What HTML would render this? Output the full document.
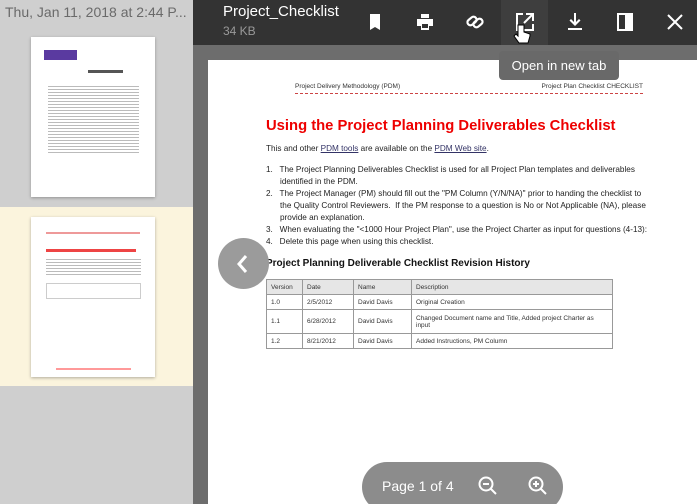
<!DOCTYPE html>
<html><head><style>
*{margin:0;padding:0;box-sizing:border-box}
html,body{width:697px;height:504px;overflow:hidden}
body{position:relative;font-family:"Liberation Sans",Arial,sans-serif;background:#6d6d6d}
.abs{position:absolute}
#side{left:0;top:0;width:193px;height:504px;background:#cfcfcf}
#top{left:193px;top:0;width:504px;height:45px;background:#333}
#page{left:208px;top:60px;width:489px;height:444px;background:#fff}
.ic{position:absolute;top:10px}
.doc{font-size:8.2px;color:#222;line-height:12px}
table{border-collapse:collapse;font-size:6.5px;color:#333}
td{border:1px solid #999;padding:0 4px;height:15px}
</style></head><body>
<div id="side" class="abs">
  <div class="abs" style="left:5px;top:4px;font-size:14px;color:#6a6a6a;white-space:nowrap">Thu, Jan 11, 2018 at 2:44 P...</div>
  <div class="abs" style="left:31px;top:37px;width:124px;height:160px;background:#fff;box-shadow:0 1px 3px rgba(0,0,0,.3)">
    <div class="abs" style="left:13px;top:13px;width:33px;height:10px;background:#5a3aa0"></div>
    <div class="abs" style="left:57px;top:33px;width:35px;height:3px;background:#555"></div>
    <div class="abs" style="left:17px;top:47px;width:91px;height:70px;background:repeating-linear-gradient(#fff 0 2px,#bbb 2px 3px)"></div>
  </div>
  <div class="abs" style="left:0;top:207px;width:193px;height:179px;background:#fbf4dd"></div>
  <div class="abs" style="left:31px;top:217px;width:124px;height:160px;background:#fff;box-shadow:0 1px 3px rgba(0,0,0,.3)">
    <div class="abs" style="left:15px;top:15px;width:94px;height:2px;background:#e99"></div>
    <div class="abs" style="left:15px;top:32px;width:90px;height:3px;background:#e44"></div>
    <div class="abs" style="left:15px;top:40px;width:95px;height:20px;background:repeating-linear-gradient(#fff 0 2px,#bbb 2px 3px)"></div>
    <div class="abs" style="left:15px;top:66px;width:95px;height:16px;border:1px solid #ccc"></div>
    <div class="abs" style="left:25px;top:151px;width:75px;height:2px;background:#f99"></div>
  </div>
</div>
<div id="top" class="abs">
  <div class="abs" style="left:30px;top:3px;font-size:15px;color:#fff">Project_Checklist</div>
  <div class="abs" style="left:30px;top:24px;font-size:12px;color:#999">34 KB</div>
  <div class="abs" style="left:308px;top:0;width:47px;height:45px;background:#3e3e3e"></div>
  <svg class="ic" style="left:170px" width="24" height="24" viewBox="0 0 24 24"><path d="M7 4h10v16l-5-3-5 3z" fill="#fff"/></svg>
  <svg class="ic" style="left:220px" width="24" height="24" viewBox="0 0 24 24"><path d="M8 4h8v4H8zM4 9h16v7h-4v4H8v-4H4zM9 14v4h6v-4z" fill="#fff"/></svg>
  <svg class="ic" style="left:270px" width="24" height="24" viewBox="0 0 24 24"><g fill="none" stroke="#fff" stroke-width="2.2"><rect x="4" y="8" width="10" height="6" rx="3" transform="rotate(-40 9 11)"/><rect x="10" y="10" width="10" height="6" rx="3" transform="rotate(-40 15 13)"/></g></svg>
  <svg class="ic" style="left:320px" width="24" height="24" viewBox="0 0 24 24"><path d="M10 4H4v16h16v-6M13 4h7v7M20 4l-9 9" fill="none" stroke="#fff" stroke-width="2"/></svg>
  <svg class="abs" style="left:320px;top:24px" width="18" height="22" viewBox="0 0 18 22"><path d="M5 1v11l-2-2-2 2 5 7h9l2-7V10l-3-1-3-1V1z" fill="#fff" stroke="#000" stroke-width="1"/></svg>
  <svg class="ic" style="left:370px" width="24" height="24" viewBox="0 0 24 24"><path d="M11 3h2v9l3-3 1.5 1.5L12 16l-5.5-5.5L8 9l3 3zM5 18h14v2H5z" fill="#fff"/></svg>
  <svg class="ic" style="left:420px" width="24" height="24" viewBox="0 0 24 24"><rect x="5" y="4" width="14" height="16" fill="none" stroke="#fff" stroke-width="2"/><rect x="12" y="4" width="7" height="16" fill="#fff"/></svg>
  <svg class="ic" style="left:470px" width="24" height="24" viewBox="0 0 24 24"><path d="M5 5l14 14M19 5L5 19" stroke="#fff" stroke-width="2"/></svg>
</div>
<div id="page" class="abs">
  <div class="abs" style="left:87px;top:23px;width:348px;font-size:6.5px;color:#333;border-bottom:1px dashed #c44;padding-bottom:3px">Project Delivery Methodology (PDM)<span style="float:right">Project Plan Checklist CHECKLIST</span></div>
  <div class="abs" style="left:58px;top:58px;font-size:14.8px;font-weight:bold;color:#e00;white-space:nowrap">Using the Project Planning Deliverables Checklist</div>
  <div class="abs doc" style="left:58px;top:83px">This and other <u style="color:#336">PDM tools</u> are available on the <u style="color:#336">PDM Web site</u>.</div>
  <div class="abs doc" style="left:58px;top:104px;width:380px">
    <div style="padding-left:14px;text-indent:-14px">1.&nbsp;&nbsp; The Project Planning Deliverables Checklist is used for all Project Plan templates and deliverables identified in the PDM.</div>
    <div style="padding-left:14px;text-indent:-14px">2.&nbsp;&nbsp; The Project Manager (PM) should fill out the "PM Column (Y/N/NA)" prior to handing the checklist to the Quality Control Reviewers.&nbsp; If the PM response to a question is No or Not Applicable (NA), please provide an explanation.</div>
    <div style="padding-left:14px;text-indent:-14px;white-space:nowrap">3.&nbsp;&nbsp; When evaluating the "&lt;1000 Hour Project Plan", use the Project Charter as input for questions (4-13):</div>
    <div style="padding-left:14px;text-indent:-14px">4.&nbsp;&nbsp; Delete this page when using this checklist.</div>
  </div>
  <div class="abs" style="left:58px;top:198px;font-size:10px;font-weight:bold;color:#111">Project Planning Deliverable Checklist Revision History</div>
  <table class="abs" style="left:58px;top:219px;width:347px">
    <tr style="background:#e6e6e6"><td style="width:36px">Version</td><td style="width:51px">Date</td><td style="width:58px">Name</td><td>Description</td></tr>
    <tr><td>1.0</td><td>2/5/2012</td><td>David Davis</td><td>Original Creation</td></tr>
    <tr><td style="height:24px">1.1</td><td>6/28/2012</td><td>David Davis</td><td>Changed Document name and Title, Added project Charter as input</td></tr>
    <tr><td>1.2</td><td>8/21/2012</td><td>David Davis</td><td>Added Instructions, PM Column</td></tr>
  </table>
</div>
<div class="abs" style="left:499px;top:51px;width:120px;height:29px;background:#696969;border-radius:4px;color:#fff;font-size:13px;text-align:center;line-height:29px">Open in new tab</div>
<div class="abs" style="left:218px;top:238px;width:51px;height:51px;border-radius:50%;background:#9b9b9b"></div>
<svg class="abs" style="left:232px;top:252px" width="22" height="24" viewBox="0 0 22 24"><path d="M14 4l-7 8 7 8" fill="none" stroke="#fff" stroke-width="3"/></svg>
<div class="abs" style="left:362px;top:462px;width:201px;height:50px;border-radius:25px;background:#8c8c8c"></div>
<div class="abs" style="left:382px;top:478px;font-size:14px;color:#fff">Page 1 of 4</div>
<svg class="abs" style="left:477px;top:475px" width="22" height="22" viewBox="0 0 22 22"><circle cx="9" cy="9" r="6.5" fill="none" stroke="#fff" stroke-width="2"/><path d="M6 9h6M14 14l5 5" stroke="#fff" stroke-width="2"/></svg>
<svg class="abs" style="left:527px;top:475px" width="22" height="22" viewBox="0 0 22 22"><circle cx="9" cy="9" r="6.5" fill="none" stroke="#fff" stroke-width="2"/><path d="M6 9h6M9 6v6M14 14l5 5" stroke="#fff" stroke-width="2"/></svg>
</body></html>
